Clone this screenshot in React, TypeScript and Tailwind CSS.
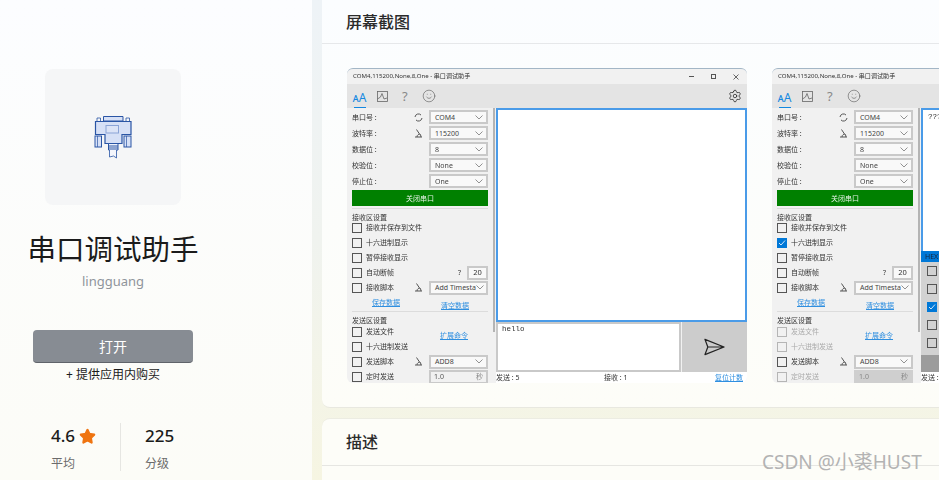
import React from 'react';
import { Settings, Smile, Star } from 'lucide-react';

const portRows = [
  { label: '串口号 :', value: 'COM4', icon: 'refresh' },
  { label: '波特率 :', value: '115200', icon: 'scope' },
  { label: '数据位 :', value: '8', icon: '' },
  { label: '校验位 :', value: 'None', icon: '' },
  { label: '停止位 :', value: 'One', icon: '' },
];

const hexRows = [false, false, true, false, false];

const Chevron = () => (
  <svg width="8" height="5" viewBox="0 0 8 5" className="shrink-0">
    <path d="M0.5 0.5 L4 4 L7.5 0.5" fill="none" stroke="#777" strokeWidth="0.8" />
  </svg>
);

const ScopeIcon = () => (
  <svg width="9" height="9" viewBox="0 0 9 9" className="shrink-0">
    <path d="M2.5 0.5 L5.5 5 M1 8 L8 8 M3 8 C3 5.5 5 5 6.5 5.5 L7 8" fill="none" stroke="#555" strokeWidth="1" />
  </svg>
);

const RefreshIcon = () => (
  <svg width="9" height="9" viewBox="0 0 9 9" className="shrink-0">
    <path d="M1 4 A3.5 3.5 0 0 1 7 2 M8 5 A3.5 3.5 0 0 1 2 7" fill="none" stroke="#555" strokeWidth="1" />
  </svg>
);

const Select = ({ value }: { value: string }) => (
  <div className="flex h-[14px] w-[59px] shrink-0 items-center justify-between border-2 border-[#c9c9c9] bg-[#f9f9f9] pl-[4px] pr-[3px] text-[7px] leading-none text-[#444]">
    <span className="whitespace-nowrap">{value}</span>
    <Chevron />
  </div>
);

const Box = ({ checked, disabled }: { checked?: boolean; disabled?: boolean }) => (
  <div className={`flex h-[10px] w-[10px] shrink-0 items-center justify-center border-[1.5px] ${checked ? 'border-[#0078d7] bg-[#0078d7]' : disabled ? 'border-[#b5b5b5]' : 'border-[#555]'}`}>
    {checked && (
      <svg width="8" height="8" viewBox="0 0 8 8">
        <path d="M1 4 L3 6 L7 1.5" fill="none" stroke="#cfe6fb" strokeWidth="1" />
      </svg>
    )}
  </div>
);

const Check = ({ label, checked, disabled, children }: { label: string; checked?: boolean; disabled?: boolean; children?: React.ReactNode }) => (
  <div className="flex h-[15px] items-center">
    <Box checked={checked} disabled={disabled} />
    <span className={`ml-[4px] whitespace-nowrap text-[7px] leading-none ${disabled ? 'text-[#aaa]' : 'text-[#333]'}`}>{label}</span>
    <div className="ml-auto flex items-center">{children}</div>
  </div>
);

const LinkText = ({ children }: { children: React.ReactNode }) => (
  <span className="whitespace-nowrap text-[7px] leading-none text-[#2f8fe0] underline">{children}</span>
);

const SendRow = ({ text }: { text: string }) => (
  <div className="flex h-[50px] shrink-0 gap-px bg-[#f1f1f1]">
    <div className="w-[185px] shrink-0 border-2 border-[#c9c9c9] bg-white pl-[4px] pt-[2px] font-['Liberation_Mono',monospace] text-[7.5px] leading-none">{text}</div>
    <div className="flex flex-1 items-center justify-center bg-[#cccccc]">
      <svg width="21" height="18" viewBox="0 0 22 18">
        <path d="M1 1 L21 9 L1 17 L4 9 Z M4 9 L21 9" fill="none" stroke="#222" strokeWidth="1.3" strokeLinejoin="round" />
      </svg>
    </div>
  </div>
);

const SerialWindow = ({ second }: { second?: boolean }) => (
  <div className="flex h-[315px] w-[400px] shrink-0 flex-col overflow-hidden rounded-[6px] border-t border-[#a3b6c6] bg-[#f1f1f1] text-[#333] blur-[0.25px]">
    <div className="flex h-[15px] shrink-0 items-center justify-between pl-[6px] pr-[8px]">
      <span className="whitespace-nowrap text-[6.1px] leading-none text-[#333]">COM4,115200,None,8,One - 串口调试助手</span>
      <div className="flex items-center gap-[17px]">
        <div className="h-px w-[5px] bg-[#555]" />
        <div className="h-[5px] w-[5px] border border-[#555]" />
        <svg width="6" height="6" viewBox="0 0 6 6">
          <path d="M0.5 0.5 L5.5 5.5 M5.5 0.5 L0.5 5.5" stroke="#444" strokeWidth="0.8" />
        </svg>
      </div>
    </div>
    <div className="flex h-[24px] shrink-0 items-center bg-[#e4e4e4] pl-[6px] pr-[5px]">
      <div className="flex h-full w-[13px] flex-col items-center justify-end">
        <span className="text-[12px] leading-[15px] text-[#1488e0]">ᴀA</span>
        <div className="mt-[2px] h-[1.5px] w-[12px] bg-[#1488e0]" />
      </div>
      <svg width="11" height="11" viewBox="0 0 11 11" className="ml-[11px]">
        <rect x="0.5" y="0.5" width="10" height="10" fill="none" stroke="#666" strokeWidth="0.8" />
        <path d="M0.5 8 L3.5 6 L5 2.5 L7 8 L10 7" fill="none" stroke="#666" strokeWidth="0.8" />
      </svg>
      <span className="ml-[14px] w-[6px] text-[13px] leading-none text-[#888]">?</span>
      <Smile size={14} strokeWidth={1} className="ml-[14px] text-[#555]" />
      <Settings size={14} strokeWidth={1.3} className="ml-auto text-[#222]" />
    </div>
    <div className="flex min-h-0 flex-1">
      <div className="flex w-[146px] shrink-0 flex-col pl-[5px] pr-[5px] pt-px">
        {portRows.map((row) => (
          <div key={row.label} className="flex h-[16px] shrink-0 items-center">
            <span className="whitespace-nowrap text-[7px] leading-none">{row.label}</span>
            <div className="ml-auto mr-[6px]">
              {row.icon === 'refresh' && <RefreshIcon />}
              {row.icon === 'scope' && <ScopeIcon />}
            </div>
            <Select value={row.value} />
          </div>
        ))}
        <div className="mt-px flex h-[16px] shrink-0 items-center justify-center bg-[#008000] text-[7px] leading-none text-[#e6f3e6]">关闭串口</div>
        <div className="mt-[2px] h-px shrink-0 bg-[#dcdcdc]" />
        <div className="mt-[4px] h-[10px] shrink-0 text-[7px] leading-[10px]">接收区设置</div>
        <div className="-mt-[3px]">
          <Check label="接收并保存到文件" />
          <Check label="十六进制显示" checked={second} />
          <Check label="暂停接收显示" />
          <Check label="自动断帧">
            <span className="mr-[6px] text-[7px] leading-none">?</span>
            <div className="flex h-[14px] w-[21px] items-center justify-center border-2 border-[#c9c9c9] bg-[#f9f9f9] text-[7.5px] leading-none">20</div>
          </Check>
          <Check label="接收脚本">
            <div className="mr-[6px]"><ScopeIcon /></div>
            <Select value="Add Timesta" />
          </Check>
        </div>
        <div className="flex h-[14px] shrink-0 items-center pl-[20px]">
          <LinkText>保存数据</LinkText>
          <div className="ml-[41px]"><LinkText>清空数据</LinkText></div>
        </div>
        <div className="mt-[2px] h-px shrink-0 bg-[#dcdcdc]" />
        <div className="mt-[4px] h-[10px] shrink-0 text-[7px] leading-[10px]">发送区设置</div>
        <div className="-mt-[2px]">
          <Check label="发送文件" disabled={second}>
            <div className="mr-[20px]"><LinkText>扩展命令</LinkText></div>
          </Check>
          <Check label="十六进制发送" disabled={second} />
          <Check label="发送脚本">
            <div className="mr-[6px]"><ScopeIcon /></div>
            <Select value="ADD8" />
          </Check>
          <Check label="定时发送" disabled={second}>
            <div className={`flex h-[14px] w-[59px] items-center justify-between border-2 px-[3px] text-[7px] leading-none ${second ? 'border-[#cfcfcf] bg-[#cfcfcf] text-[#888]' : 'border-[#c9c9c9] bg-[#f1f1f1] text-[#555]'}`}>
              <span>1.0</span>
              <span className="text-[#888]">秒</span>
            </div>
          </Check>
        </div>
      </div>
      <div className="w-[3px] shrink-0">
        <div className="h-[224px] w-[2px] bg-[#b4b4b4]" />
      </div>
      <div className="flex min-w-0 flex-1 flex-col bg-white">
        {second ? (
          <>
            <div className="h-[143px] shrink-0 border-2 border-b-0 border-[#4a9be8] pl-[5px] pt-[4px] font-['Liberation_Mono',monospace] text-[7.5px] leading-none">??? ??? ???</div>
            <div className="h-[11px] shrink-0 bg-[#0078d7] pl-[4px] text-[7px] leading-[11px] text-[#17253a]">HEX</div>
            <div className="flex h-[93px] shrink-0 flex-col gap-[8px] overflow-hidden bg-[#d2d2d2] pl-[6px] pt-[4px]">
              {hexRows.map((checked, i) => (
                <Box key={i} checked={checked} />
              ))}
            </div>
            <div className="h-[17px] shrink-0 bg-[#9c9c9c]" />
          </>
        ) : (
          <>
            <div className="h-[214px] shrink-0 border-2 border-[#4a9be8]" />
            <SendRow text="hello" />
          </>
        )}
        <div className="flex h-[11px] shrink-0 items-center text-[7px] leading-none">
          <span className="w-[108px] whitespace-nowrap">发送 : {second ? '' : '5'}</span>
          <span className="w-[111px] whitespace-nowrap">接收 : 1</span>
          <span className="whitespace-nowrap text-[#2f8fe0] underline">复位计数</span>
        </div>
      </div>
    </div>
  </div>
);

const ConnectorIcon = () => (
  <svg width="38" height="44" viewBox="0 0 38 44" fill="#d6e0f6" stroke="#2a55a5" strokeWidth="1">
    <path d="M9.5 6 V1.5 H29 V6 Z" />
    <path d="M3 6 V3 H6.5 V6 M32 6 V3 H35.5 V6" fill="none" strokeWidth="0.8" />
    <path d="M1.5 6.5 H37 V19.5 H28 V28.5 H11 V19.5 H1.5 Z" strokeWidth="1.2" />
    <rect x="12" y="10.5" width="12.5" height="7.5" fill="#dbe3f6" stroke="#8aa3d6" />
    <rect x="1" y="21" width="6.5" height="11" />
    <path d="M3.5 21 V32" strokeWidth="0.7" />
    <rect x="30" y="21" width="7" height="11" />
    <path d="M32.5 21 V32" strokeWidth="0.7" />
    <path d="M14.5 28.5 H24 V35 H14.5 Z M14.5 31 H24 M14.5 33 H24" fill="#eef2fb" />
    <path d="M15.5 35 V42 L19.5 41 L22.5 43 V35" fill="#f4f6fc" strokeWidth="0.8" />
  </svg>
);

export default function App() {
  return (
    <div className="relative flex h-[480px] w-[939px] overflow-hidden bg-linear-to-b from-[#eef3f7] via-[#f0f3ef] to-[#f6f5e2] font-['Noto_Sans','Noto_Sans_CJK_SC',sans-serif]">
      <aside className="flex h-full w-[312px] shrink-0 flex-col items-center bg-linear-to-b from-[#fcfdff] to-[#fcfcf7] pr-[86px] pt-[69px]">
        <div className="flex h-[136px] w-[136px] items-center justify-center rounded-[8px] bg-[#f5f6f7]">
          <ConnectorIcon />
        </div>
        <h1 className="mt-[24px] text-[28.5px] font-normal leading-[40px] text-[#1b1b1b]">串口调试助手</h1>
        <p className="mt-[2px] text-[13px] leading-[20px] text-[#8f949b]">lingguang</p>
        <button className="mt-[39px] h-[33px] w-[160px] rounded-[4px] border-b border-[#5f636a] bg-[#878c93] text-[14px] text-white">打开</button>
        <p className="mt-[3px] text-[12px] leading-[18px] text-[#1b1b1b]">+ 提供应用内购买</p>
        <div className="ml-[51px] mt-[39px] flex h-[48px] w-[222px] self-start">
          <div className="w-[70px] border-r border-[#e6e6e2] pt-[1px]">
            <div className="flex items-center gap-[4px]">
              <span className="text-[17px] font-medium leading-[24px] text-[#1b1b1b]">4.6</span>
              <Star size={17} className="fill-[#ef7410] text-[#ef7410]" />
            </div>
            <div className="mt-[7px] text-[12px] leading-[18px] text-[#6b6b6b]">平均</div>
          </div>
          <div className="pl-[24px] pt-[1px]">
            <div className="text-[17px] font-medium leading-[24px] text-[#1b1b1b]">225</div>
            <div className="mt-[7px] text-[12px] leading-[18px] text-[#6b6b6b]">分级</div>
          </div>
        </div>
      </aside>
      <main className="ml-[10px] flex min-w-0 flex-1 flex-col gap-[10px]">
        <section className="h-[408px] shrink-0 overflow-hidden rounded-bl-[8px] border-b border-[#e8e8e0] bg-linear-to-b from-[#fbfdff] to-[#fdfdf8]">
          <h2 className="flex h-[44px] items-center border-b border-[#e6e8ea] pl-[24px] text-[16px] font-medium text-[#2b2b2b]">屏幕截图</h2>
          <div className="flex gap-[25px] pl-[25px] pt-[24px]">
            <SerialWindow />
            <SerialWindow second />
          </div>
        </section>
        <section className="flex-1 rounded-tl-[8px] border-t border-[#ecece2] bg-[#fdfdf8]">
          <h2 className="flex h-[47px] items-center border-b border-[#e6e6e2] pl-[24px] text-[16px] font-medium text-[#2b2b2b]">描述</h2>
        </section>
      </main>
      <span className="absolute left-[762px] top-[449px] whitespace-nowrap text-[19px] leading-[26px] text-[#b3b3b3]">CSDN @小裘HUST</span>
    </div>
  );
}
